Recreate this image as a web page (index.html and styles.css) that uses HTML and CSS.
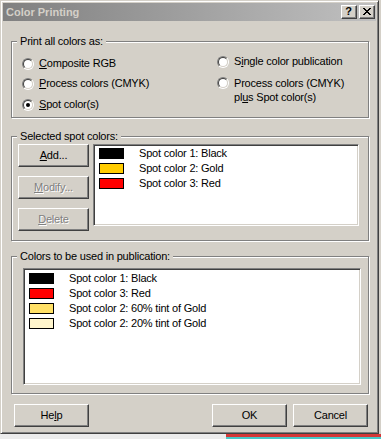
FILE: index.html
```html
<!DOCTYPE html>
<html>
<head>
<meta charset="utf-8">
<title>Color Printing</title>
<link rel="stylesheet" href="styles.css">
</head>
<body>
<div class="screen">
  <div class="window">
    <div class="caption">
      <span class="caption-title">Color Printing</span>
      <div class="caption-buttons">
        <span class="cbtn cbtn-help">?</span>
        <span class="cbtn cbtn-close">
          <svg width="8" height="7" viewBox="0 0 8 7" shape-rendering="crispEdges"><path fill="#000" d="M0 0h2v1h-2z M6 0h2v1h-2z M1 1h2v1h-2z M5 1h2v1h-2z M2 2h4v1h-4z M3 3h2v1h-2z M2 4h4v1h-4z M1 5h2v1h-2z M5 5h2v1h-2z M0 6h2v1h-2z M6 6h2v1h-2z"/></svg>
        </span>
      </div>
    </div>
    <div class="client">
      <div class="group group-print">
        <span class="legend">Print all colors as:</span>
        <div class="col col-left">
          <div class="opt"><span class="radio"></span><span class="opt-text"><u>C</u>omposite RGB</span></div>
          <div class="opt"><span class="radio"></span><span class="opt-text"><u>P</u>rocess colors (CMYK)</span></div>
          <div class="opt opt-last"><span class="radio checked"></span><span class="opt-text"><u>S</u>pot color(s)</span></div>
        </div>
        <div class="col col-right">
          <div class="opt"><span class="radio"></span><span class="opt-text">S<u>i</u>ngle color publication</span></div>
          <div class="opt opt-multi"><span class="radio"></span><span class="opt-text">Process colors (CMYK)<br>pl<u>u</u>s Spot color(s)</span></div>
        </div>
      </div>

      <div class="group group-spot">
        <span class="legend">Selected spot colors:</span>
        <div class="btn-col">
          <div class="btn"><span><u>A</u>dd...</span></div>
          <div class="btn disabled"><span><u>M</u>odify...</span></div>
          <div class="btn disabled"><span><u>D</u>elete</span></div>
        </div>
        <div class="listbox list-spot">
          <div class="item"><span class="swatch sw-black"></span>Spot color 1: Black</div>
          <div class="item"><span class="swatch sw-gold"></span>Spot color 2: Gold</div>
          <div class="item"><span class="swatch sw-red"></span>Spot color 3: Red</div>
        </div>
      </div>

      <div class="group group-pub">
        <span class="legend">Colors to be used in publication:</span>
        <div class="listbox list-pub">
          <div class="item"><span class="swatch sw-black"></span>Spot color 1: Black</div>
          <div class="item"><span class="swatch sw-red"></span>Spot color 3: Red</div>
          <div class="item"><span class="swatch sw-gold60"></span>Spot color 2: 60% tint of Gold</div>
          <div class="item"><span class="swatch sw-gold20"></span>Spot color 2: 20% tint of Gold</div>
        </div>
      </div>

      <div class="actions">
        <div class="btn btn-wide"><span>He<u>l</u>p</span></div>
        <div class="btn btn-wide btn-ok"><span>OK</span></div>
        <div class="btn btn-wide btn-cancel"><span>Cancel</span></div>
      </div>
    </div>
  </div>
  <div class="desktop-strip">
    <span class="strip-left"></span>
    <span class="strip-right"></span>
  </div>
</div>
</body>
</html>
```

FILE: styles.css
```css
html, body {
  margin: 0;
  padding: 0;
}

body {
  width: 381px;
  height: 439px;
  overflow: hidden;
  background: #d4d0c8;
  font-family: "Liberation Sans", Arial, sans-serif;
  font-size: 11px;
  line-height: 13px;
  letter-spacing: -0.2px;
  color: #000;
}

u {
  text-decoration: underline;
  text-underline-offset: 1px;
}

.screen {
  display: flex;
  flex-direction: column;
}

.window {
  width: 379px;
  height: 434px;
  box-sizing: border-box;
  border: 1px solid;
  border-color: #d4d0c8 #404040 #404040 #d4d0c8;
  box-shadow: inset 1px 1px 0 #fff, inset -1px -1px 0 #808080;
  padding: 2px;
  background: #d4d0c8;
  display: flex;
  flex-direction: column;
}

/* ---- caption ---- */
.caption {
  height: 18px;
  flex: none;
  display: flex;
  align-items: center;
  padding: 0 1px 0 3px;
  background: linear-gradient(to right, #808080, #c0c0c0);
}

.caption-title {
  color: #d4d0c8;
  font-weight: bold;
  font-size: 11px;
  line-height: 13px;
  letter-spacing: 0;
}

.caption-buttons {
  margin-left: auto;
  display: flex;
  gap: 2px;
}

.cbtn {
  width: 16px;
  height: 14px;
  box-sizing: border-box;
  border: 1px solid;
  border-color: #fff #404040 #404040 #fff;
  box-shadow: inset -1px -1px 0 #808080;
  background: #d4d0c8;
  display: flex;
  align-items: center;
  justify-content: center;
}

.cbtn-help {
  font-weight: bold;
  font-size: 11px;
  line-height: 11px;
  padding: 0 1px 1px 0;
}

.cbtn-close {
  padding: 0 1px 1px 0;
}

.cbtn-close svg {
  display: block;
}

/* ---- client area ---- */
.client {
  flex: 1;
  padding: 20px 7px 0 8px;
  display: flex;
  flex-direction: column;
}

.group {
  position: relative;
  box-sizing: border-box;
  border: 1px solid #808080;
  box-shadow: 1px 1px 0 #fff, inset 1px 1px 0 #fff;
  flex: none;
}

.legend {
  position: absolute;
  top: -7px;
  left: 5px;
  padding: 0 3px;
  background: #d4d0c8;
  white-space: nowrap;
}

/* group 1 */
.group-print {
  height: 77px;
  display: flex;
  padding-left: 10px;
}

.col-left {
  width: 195px;
  padding-top: 15px;
  display: flex;
  flex-direction: column;
  gap: 7px;
}

.col-right {
  padding-top: 13px;
  display: flex;
  flex-direction: column;
  gap: 8px;
}

.opt {
  display: flex;
  align-items: center;
  height: 13px;
  white-space: nowrap;
}

.opt-last {
  margin-top: 1px;
}

.opt-multi {
  height: auto;
  align-items: flex-start;
  line-height: 14px;
}

.opt-multi .radio {
  margin-top: 1px;
}

.radio {
  position: relative;
  flex: none;
  width: 12px;
  height: 12px;
  box-sizing: border-box;
  border-radius: 50%;
  border: 1px solid;
  border-color: #808080 #fff #fff #808080;
  margin-right: 5px;
}

.radio::before {
  content: "";
  position: absolute;
  inset: 0;
  box-sizing: border-box;
  border-radius: 50%;
  border: 1px solid;
  border-color: #404040 #d4d0c8 #d4d0c8 #404040;
  background: #fff;
}

.radio.checked::after {
  content: "";
  position: absolute;
  left: 3px;
  top: 3px;
  width: 4px;
  height: 4px;
  border-radius: 50%;
  background: #000;
}

/* group 2 */
.group-spot {
  margin-top: 18px;
  height: 105px;
  display: flex;
  align-items: flex-start;
  padding: 7px 0 0 6px;
}

.btn-col {
  display: flex;
  flex-direction: column;
  gap: 9px;
  width: 71px;
}

.btn {
  height: 23px;
  box-sizing: border-box;
  border: 1px solid;
  border-color: #fff #404040 #404040 #fff;
  box-shadow: inset -1px -1px 0 #808080;
  background: #d4d0c8;
  display: flex;
  align-items: center;
  justify-content: center;
  white-space: nowrap;
}

.btn.disabled {
  color: #808080;
  text-shadow: 1px 1px 0 #fff;
}

.listbox {
  box-sizing: border-box;
  border: 1px solid;
  border-color: #808080 #fff #fff #808080;
  box-shadow: inset 1px 1px 0 #404040, inset -1px -1px 0 #d4d0c8;
  background: #fff;
  padding: 1px 0 0 5px;
}

.list-spot {
  margin-left: 4px;
  width: 266px;
  height: 82px;
}

.item {
  display: flex;
  align-items: center;
  height: 15px;
  line-height: 15px;
  white-space: nowrap;
}

.swatch {
  flex: none;
  width: 25px;
  height: 11px;
  box-sizing: border-box;
  border: 1px solid #000;
  margin-right: 15px;
}

.sw-black { background: #000; }
.sw-gold { background: #ffcc00; }
.sw-red { background: #ff0000; }
.sw-gold60 { background: #ffe066; }
.sw-gold20 { background: #fff5cc; }

/* group 3 */
.group-pub {
  margin-top: 15px;
  height: 138px;
  padding: 11px 0 0 11px;
}

.list-pub {
  width: 338px;
  height: 117px;
  padding-top: 2px;
}

/* bottom buttons */
.actions {
  margin-top: 10px;
  display: flex;
  padding-left: 3px;
}

.btn-wide {
  width: 75px;
}

.btn-ok {
  margin-left: auto;
}

.btn-cancel {
  margin-left: 6px;
  margin-right: 1px;
}

/* desktop showing below the window */
.desktop-strip {
  display: flex;
  height: 5px;
}

.strip-left {
  width: 226px;
  background: #ececec;
}

.strip-right {
  flex: 1;
  background: linear-gradient(to bottom, #d43838 0, #d43838 3px, #48c8c8 3px);
}
```
